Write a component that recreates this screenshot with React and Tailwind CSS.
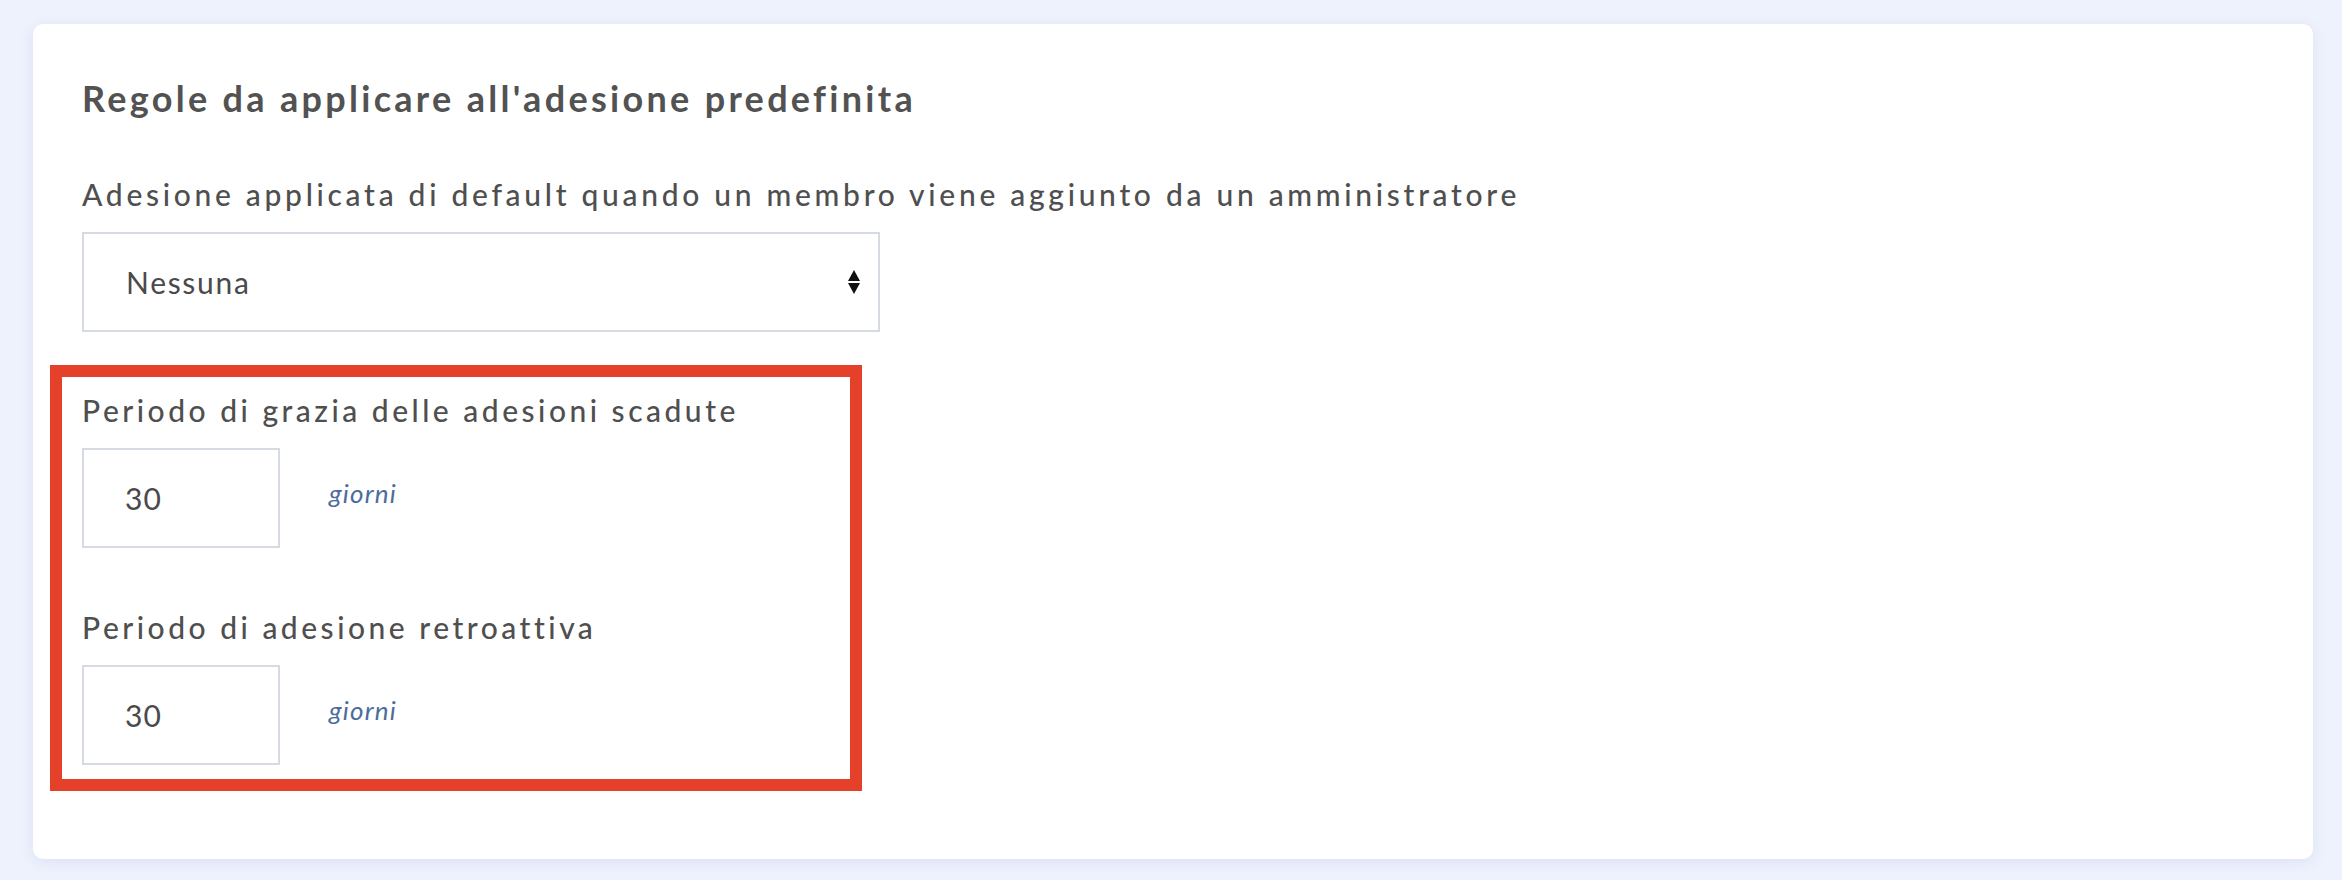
import React from "react";

function DaysField({ label, value }) {
  return (
    <div className="flex flex-col">
      <label className="text-[30px] leading-[36px] font-medium tracking-[3.5px] text-[#4f4f4f]">{label}</label>
      <div className="mt-[20px] flex items-center">
        <input
          type="text"
          defaultValue={value}
          className="w-[198px] h-[100px] border-2 border-[#d6dbe3] bg-white pl-[41px] text-[30px] tracking-[1px] text-[#4a4a4a] outline-none"
        />
        <span className="ml-[49px] mb-[10px] text-[26px] italic tracking-[1.2px] text-[#4b6c9c]">giorni</span>
      </div>
    </div>
  );
}

export default function App() {
  return (
    <div
      className="min-h-[880px] bg-[#eef2fc] pt-[24px] pl-[33px] pr-[29px] pb-[21px]"
      style={{ fontFamily: "Lato, 'Noto Sans', sans-serif" }}
    >
      <div className="rounded-[10px] bg-white pl-[49px] pr-[49px] pt-[52px] pb-[68px] shadow-[0_3px_14px_rgba(110,130,220,0.14)]">
        <h2 className="text-[36px] leading-[44px] font-bold tracking-[3.3px] text-[#525252]">
          Regole da applicare all'adesione predefinita
        </h2>

        <div className="mt-[56px]">
          <label className="block text-[30px] leading-[36px] font-medium tracking-[3.7px] text-[#4f4f4f]">
            Adesione applicata di default quando un membro viene aggiunto da un amministratore
          </label>
          <div className="relative mt-[20px] w-[798px] h-[100px] border-2 border-[#d6dbe3] bg-white flex items-center">
            <span className="pl-[42px] text-[30px] tracking-[1.7px] text-[#4a4a4a]">Nessuna</span>
            <div className="absolute right-[18px] top-1/2 -translate-y-1/2 flex flex-col items-center gap-[2px]">
              <svg width="12" height="11" viewBox="0 0 12 11">
                <path d="M6 0 L12 11 L0 11 Z" fill="#111" />
              </svg>
              <svg width="12" height="11" viewBox="0 0 12 11">
                <path d="M0 0 L12 0 L6 11 Z" fill="#111" />
              </svg>
            </div>
          </div>
        </div>

        <div className="mt-[33px] -ml-[32px] w-[812px] border-[12px] border-[#e5402a] pl-[20px] pt-[15px] pb-[14px] flex flex-col gap-[61px]">
          <DaysField label="Periodo di grazia delle adesioni scadute" value="30" />
          <DaysField label="Periodo di adesione retroattiva" value="30" />
        </div>
      </div>
    </div>
  );
}
